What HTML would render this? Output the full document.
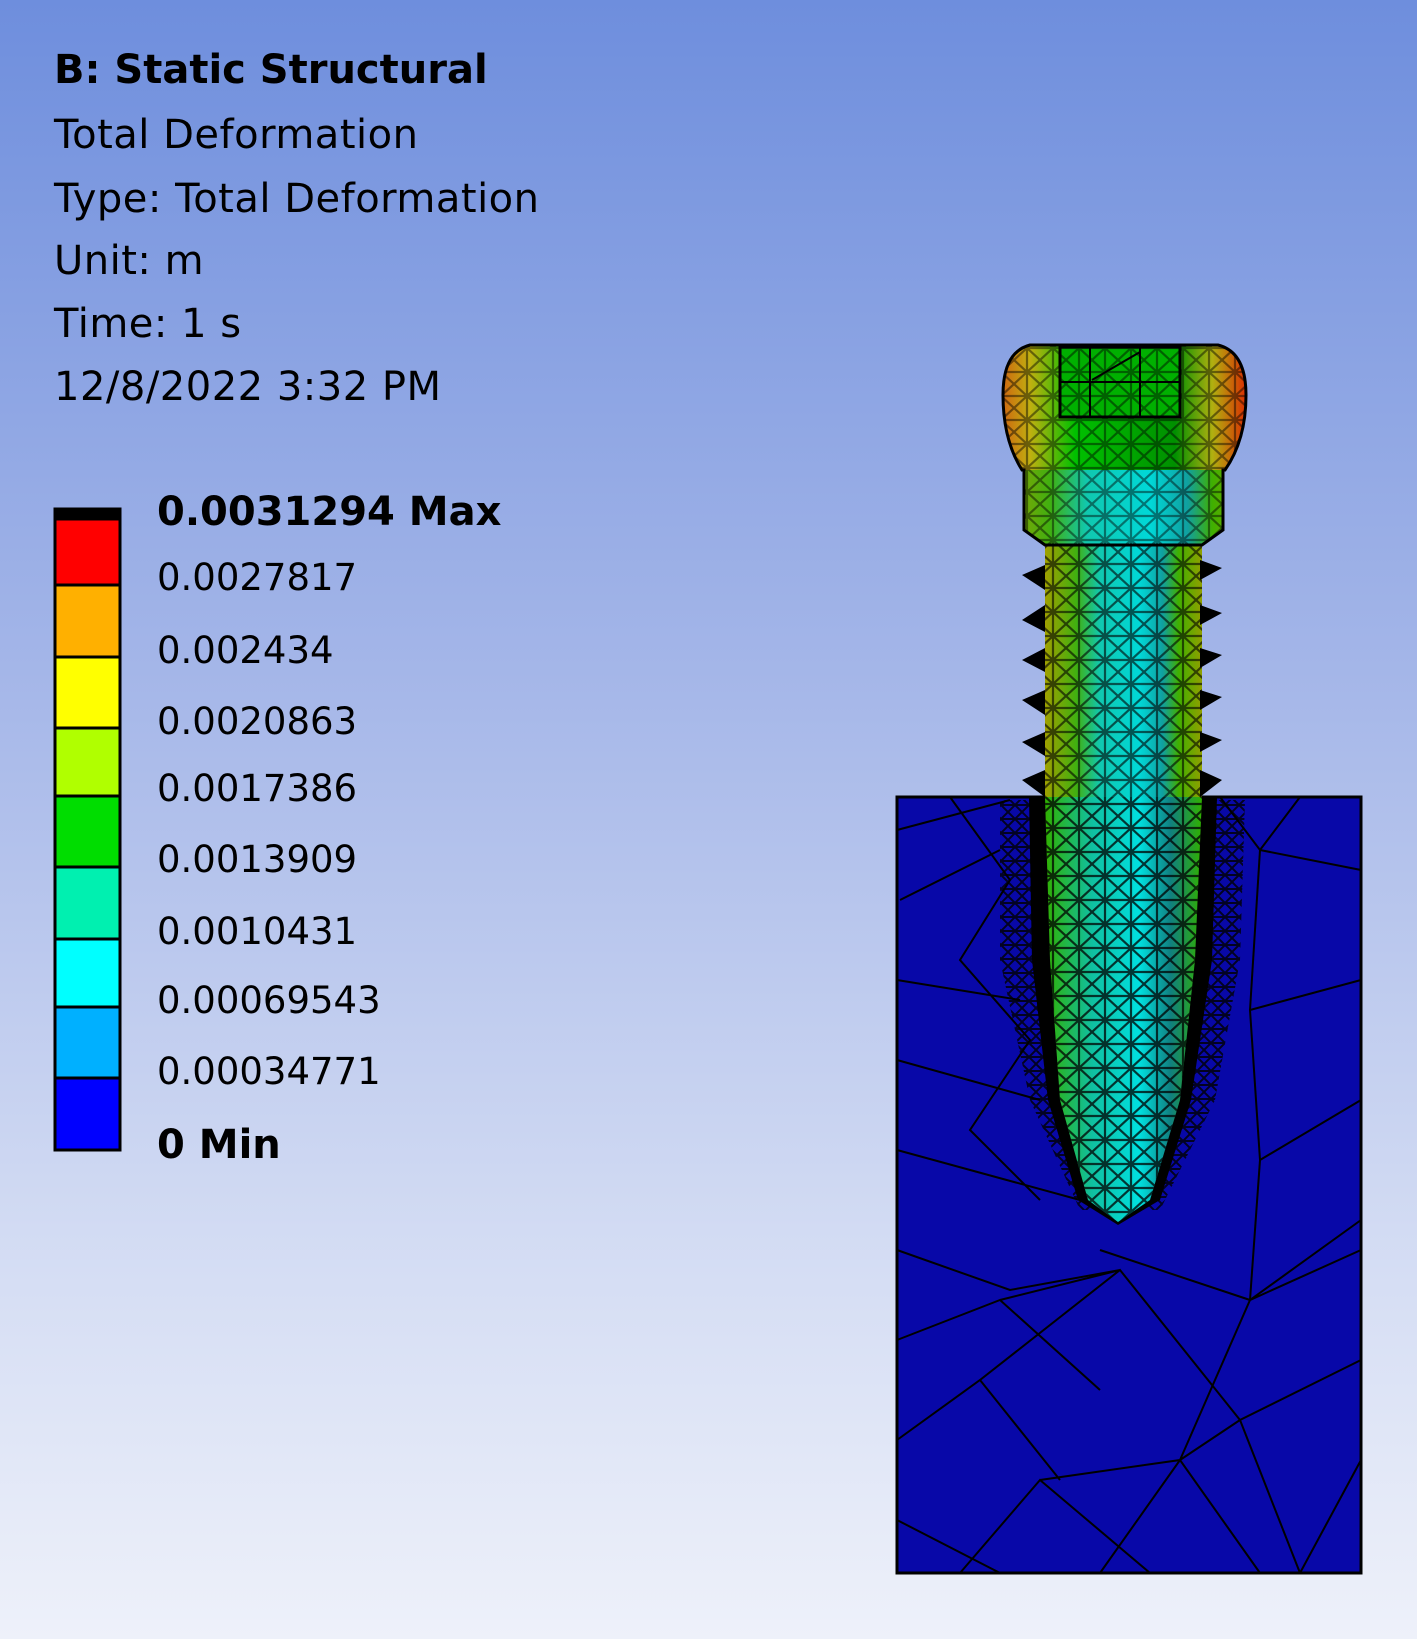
<!DOCTYPE html>
<html><head><meta charset="utf-8"><style>
html,body{margin:0;padding:0}
body{width:1417px;height:1639px;overflow:hidden;position:relative;background:linear-gradient(#6e8edd 0%,#a3b5e8 40%,#d2dbf3 75%,#eef1fa 100%);font-family:"DejaVu Sans","Liberation Sans",sans-serif;color:#000}
.t{position:absolute;left:54px;font-size:40px;line-height:1;white-space:nowrap;letter-spacing:0.5px}
.l{position:absolute;left:157px;font-size:37px;line-height:1;white-space:nowrap}
.b{font-weight:bold}
svg{position:absolute;left:0;top:0}
</style></head><body>
<div class="t b" style="top:50px;letter-spacing:0">B: Static Structural</div>
<div class="t" style="top:115px">Total Deformation</div>
<div class="t" style="top:179px">Type: Total Deformation</div>
<div class="t" style="top:241px">Unit: m</div>
<div class="t" style="top:304px">Time: 1 s</div>
<div class="t" style="top:367px">12/8/2022 3:32 PM</div>

<svg width="1417" height="1639" viewBox="0 0 1417 1639">
<g stroke="#000" stroke-width="3">
<rect x="55" y="509" width="65" height="10" fill="#000"/>
<rect x="55" y="519" width="65" height="66" fill="#ff0000"/>
<rect x="55" y="585" width="65" height="72" fill="#ffb000"/>
<rect x="55" y="657" width="65" height="71" fill="#ffff00"/>
<rect x="55" y="728" width="65" height="68" fill="#b0ff00"/>
<rect x="55" y="796" width="65" height="71" fill="#00dd00"/>
<rect x="55" y="867" width="65" height="72" fill="#00f0b0"/>
<rect x="55" y="939" width="65" height="68" fill="#00ffff"/>
<rect x="55" y="1007" width="65" height="71" fill="#00b0ff"/>
<rect x="55" y="1078" width="65" height="72" fill="#0000ff"/>
</g>
<defs>
<linearGradient id="hd" x1="0" x2="1"><stop offset="0" stop-color="#d06010"/><stop offset=".12" stop-color="#c0b010"/><stop offset=".3" stop-color="#00c000"/><stop offset=".7" stop-color="#009000"/><stop offset=".85" stop-color="#b0b010"/><stop offset="1" stop-color="#e02000"/></linearGradient>
<linearGradient id="sh" x1="0" x2="1"><stop offset="0" stop-color="#a0a000"/><stop offset=".2" stop-color="#40b010"/><stop offset=".35" stop-color="#10c8b0"/><stop offset=".6" stop-color="#00d8d8"/><stop offset=".75" stop-color="#10a0a0"/><stop offset=".85" stop-color="#40b000"/><stop offset="1" stop-color="#90a000"/></linearGradient>
<linearGradient id="cr" x1="0" x2="1"><stop offset="0" stop-color="#30b000"/><stop offset=".3" stop-color="#10c0a0"/><stop offset=".6" stop-color="#00e0e0"/><stop offset=".8" stop-color="#108080"/><stop offset="1" stop-color="#30b000"/></linearGradient>
<pattern id="mesh" width="26" height="24" patternUnits="userSpaceOnUse"><path d="M0 0L26 24M26 0L0 24M0 12H26M13 0V24" stroke="#000" stroke-width="2.2" fill="none"/></pattern>
<pattern id="mesh2" width="14" height="14" patternUnits="userSpaceOnUse"><path d="M0 0L14 14M14 0L0 14M0 7H14" stroke="#000" stroke-width="2" fill="none"/></pattern>
<clipPath id="hc"><path d="M1030 345L1218 345Q1246 352 1246 395Q1246 440 1225 470L1223 470L1223 530L1202 545L1045 545L1024 530L1024 470L1022 470Q1003 440 1003 395Q1003 352 1030 345Z"/></clipPath>
</defs>
<!-- block -->
<rect x="897" y="797" width="464" height="776" fill="#0808a8" stroke="#000" stroke-width="3"/>
<g stroke="#000" stroke-width="2" fill="none">
<path d="M897 830L1010 800M900 900L1000 850M897 980L1020 1000M897 1060L1040 1100M897 1150L1080 1200M897 1250L1010 1290L1120 1270M897 1340L1000 1300L1100 1390M897 1440L980 1380L1060 1480M897 1520L1000 1573M960 1573L1040 1480L1150 1573M1100 1573L1180 1460L1260 1573M1361 1360L1240 1420L1300 1573M1361 1220L1250 1300L1180 1460M1361 1100L1260 1160L1250 1300M1361 980L1250 1010L1260 1160M1361 870L1260 850L1250 1010M1300 797L1260 850L1220 797M1100 1250L1250 1300L1361 1250M1040 1480L1180 1460L1240 1420M980 1380L1120 1270L1240 1420M1000 1300L1120 1270M950 797L1010 880L960 960L1030 1040L970 1130L1040 1200M1361 1460L1300 1573"/>
</g>
<path d="M1000 800L1245 800L1240 960L1215 1100L1160 1210L1080 1210L1030 1100L1000 960Z" fill="url(#mesh2)" opacity=".8"/>
<!-- screw inside block -->
<path d="M1029 797L1217 797L1212 960L1191 1100L1160 1200L1118 1225L1078 1200L1048 1100L1032 960Z" fill="#000"/>
<path d="M1045 797L1202 797L1195 960L1180 1100L1150 1200L1118 1222L1088 1200L1060 1100L1050 960Z" fill="url(#cr)"/>
<path d="M1045 797L1202 797L1195 960L1180 1100L1150 1200L1118 1222L1088 1200L1060 1100L1050 960Z" fill="url(#mesh)" opacity=".75"/>
<!-- threads -->
<path d="M1045 543L1202 543L1202 797L1045 797Z" fill="url(#sh)"/>
<rect x="1045" y="543" width="157" height="254" fill="url(#mesh)" opacity=".6"/>
<g fill="#000">
<path d="M1045 565L1022 575L1045 590ZM1045 605L1022 620L1045 632ZM1045 648L1022 660L1045 672ZM1045 690L1022 700L1045 715ZM1045 732L1022 742L1045 756ZM1045 770L1022 780L1045 797Z"/>
<path d="M1200 560L1222 568L1200 580ZM1200 605L1222 613L1200 625ZM1200 648L1222 655L1200 668ZM1200 690L1222 697L1200 710ZM1200 732L1222 740L1200 752ZM1200 770L1222 780L1200 797Z"/>
</g>
<!-- head + shank -->
<g clip-path="url(#hc)">
<rect x="1000" y="340" width="250" height="210" fill="url(#sh)"/>
<path d="M1000 340H1250V470H1000Z" fill="url(#hd)"/>
<rect x="1060" y="347" width="120" height="70" fill="#00b000" stroke="#000" stroke-width="3"/>
<path d="M1090 347V417M1140 347V417M1060 382H1180M1092 380L1140 352" stroke="#000" stroke-width="2"/>
<rect x="1000" y="340" width="250" height="210" fill="url(#mesh)" opacity=".45"/>
</g>
<path d="M1030 345L1218 345Q1246 352 1246 395Q1246 440 1225 470L1223 470L1223 530L1202 545L1045 545L1024 530L1024 470L1022 470Q1003 440 1003 395Q1003 352 1030 345Z" fill="none" stroke="#000" stroke-width="3"/>
</svg>

<div class="l b" style="top:492px;font-size:40px">0.0031294 Max</div>
<div class="l" style="top:559px">0.0027817</div>
<div class="l" style="top:632px">0.002434</div>
<div class="l" style="top:703px">0.0020863</div>
<div class="l" style="top:770px">0.0017386</div>
<div class="l" style="top:841px">0.0013909</div>
<div class="l" style="top:913px">0.0010431</div>
<div class="l" style="top:982px">0.00069543</div>
<div class="l" style="top:1053px">0.00034771</div>
<div class="l b" style="top:1125px;font-size:40px">0 Min</div>
</body></html>
